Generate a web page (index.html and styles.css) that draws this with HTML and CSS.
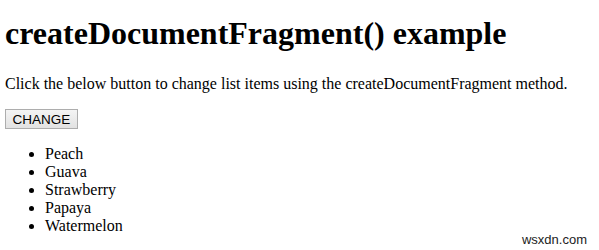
FILE: index.html
```html
<!DOCTYPE html>
<html lang="en">
<head>
  <meta charset="UTF-8">
  <meta name="viewport" content="width=device-width, initial-scale=1.0">
  <title>createDocumentFragment() example</title>
  <link rel="stylesheet" href="styles.css">
</head>
<body>

  <h1 class="page-title">createDocumentFragment() example</h1>
  <p class="intro">Click the below button to change list items using the createDocumentFragment method.</p>
  <button class="change-button">CHANGE</button>

  <!-- Fruit list -->
  <ul class="fruit-list">
    <li>Peach</li>
    <li>Guava</li>
    <li>Strawberry</li>
    <li>Papaya</li>
    <li>Watermelon</li>
  </ul>

  <span class="watermark">wsxdn.com</span>

</body>
</html>
```

FILE: styles.css
```css
/* Plain document look */
body {
  font-family: "Liberation Serif", "Times New Roman", serif;
  font-size: 16px;
  margin: 0 5px;
  padding-top: 15px;
  color: #000;
  background-color: #fff;
}

.page-title {
  font-size: 32px;
  font-weight: bold;
  margin: 0 0 23px;
}

.intro {
  margin: 0 0 16px;
}

/* Old-style grey button */
.change-button {
  display: block;
  box-sizing: border-box;
  height: 20px;
  width: 73px;
  font-family: "Liberation Sans", Arial, sans-serif;
  font-size: 13.5px;
  padding: 0;
  border: 1px solid #adadad;
  background: linear-gradient(#f4f4f4, #e2e2e2);
  color: #000;
}

.fruit-list {
  margin: 16px 0 0;
  padding-left: 40px;
  line-height: 18px;
}

.watermark {
  position: absolute;
  right: 12px;
  bottom: 3px;
  font-family: "Liberation Sans", Arial, sans-serif;
  font-size: 13px;
  color: #222;
}
```
